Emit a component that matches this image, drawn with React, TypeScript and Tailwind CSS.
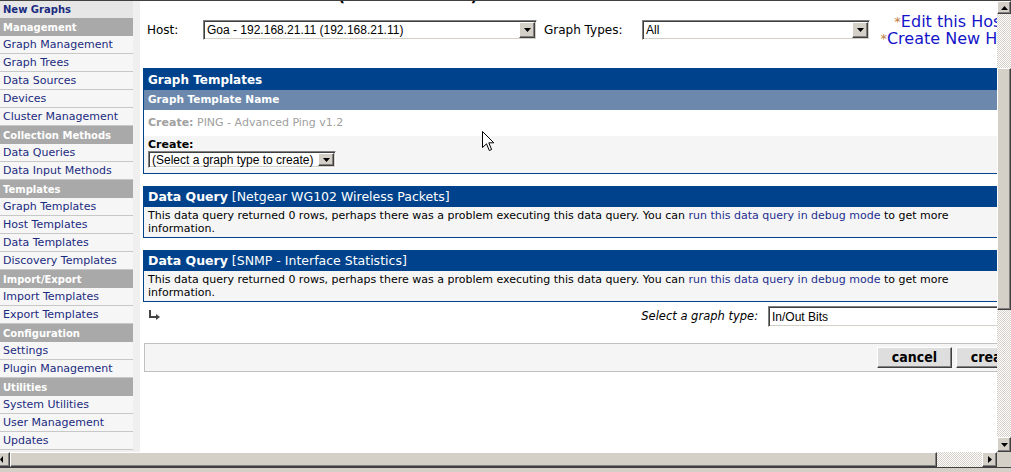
import React from 'react';

const menu: [string, string][] = [
  ['sel', 'New Graphs'],
  ['h', 'Management'],
  ['i', 'Graph Management'],
  ['i', 'Graph Trees'],
  ['i', 'Data Sources'],
  ['i', 'Devices'],
  ['i', 'Cluster Management'],
  ['h', 'Collection Methods'],
  ['i', 'Data Queries'],
  ['i', 'Data Input Methods'],
  ['h', 'Templates'],
  ['i', 'Graph Templates'],
  ['i', 'Host Templates'],
  ['i', 'Data Templates'],
  ['i', 'Discovery Templates'],
  ['h', 'Import/Export'],
  ['i', 'Import Templates'],
  ['i', 'Export Templates'],
  ['h', 'Configuration'],
  ['i', 'Settings'],
  ['i', 'Plugin Management'],
  ['h', 'Utilities'],
  ['i', 'System Utilities'],
  ['i', 'User Management'],
  ['i', 'Updates'],
];

const checker =
  'bg-[image:repeating-conic-gradient(#d4d0c8_0%_25%,#ffffff_0%_50%)] bg-[length:2px_2px]';
const raised =
  'bg-[#d4d0c8] border border-t-white border-l-white border-r-[#404040] border-b-[#404040] shadow-[inset_-1px_-1px_#808080]';

const Sidebar = () => (
  <div className="w-[140px] shrink-0 bg-[#efefef] h-full overflow-hidden">
    {menu.map(([kind, label], i) => {
      if (kind === 'h') {
        return (
          <div key={i} className="w-[133px] h-[18px] bg-[#a9a9a9] text-white font-bold text-[10px] flex items-center pl-[3px] pt-[1px]">
            {label}
          </div>
        );
      }
      if (kind === 'sel') {
        return (
          <div key={i} className="w-[133px] h-[17px] bg-[#e6e6e6] text-[#1b2b80] font-bold text-[10px] flex items-center pl-[3px]">
            {label}
          </div>
        );
      }
      return (
        <div key={i} className="w-[133px] h-[18px] bg-[#f6f6f6] border-b border-[#c8c8c8] text-[#1b2b80] text-[11px] flex items-center pl-[3px] pt-[1px] whitespace-nowrap">
          {label}
        </div>
      );
    })}
  </div>
);

const Select = ({ value, className, arrow = true }: { value: string; className: string; arrow?: boolean }) => (
  <div className={`flex bg-white border border-t-[#808080] border-l-[#808080] border-r-white border-b-white shadow-[inset_1px_1px_#404040,inset_-1px_-1px_#d4d0c8] ${className}`}>
    <span className="flex-1 pl-[3px] flex items-center font-['Liberation_Sans',Arial,sans-serif] text-[12px] text-black whitespace-nowrap overflow-hidden">
      {value}
    </span>
    {arrow && (
      <span className={`w-[16px] my-[1px] mr-[1px] flex items-center justify-center ${raised}`}>
        <svg width="7" height="4" viewBox="0 0 7 4"><path d="M0 0h7L3.5 4z" fill="#000" /></svg>
      </span>
    )}
  </div>
);

const DataQuery = ({ name }: { name: string }) => (
  <div className="mt-[12px] border border-[#00438c]">
    <div className="h-[20px] bg-[#00438c] text-white text-[12.5px] flex items-center px-[4px] whitespace-nowrap">
      <b>Data Query</b>&nbsp;[{name}]
    </div>
    <div className="bg-[#f5f5f5] px-[4px] py-[2px] text-[11px] leading-[13px] text-black whitespace-nowrap">
      This data query returned 0 rows, perhaps there was a problem executing this data query. You can{' '}
      <span className="text-[#1f2f8f]">run this data query in debug mode</span> to get more
      <br />
      information.
    </div>
  </div>
);

const Content = () => (
  <div className="w-[857px] h-full overflow-hidden bg-white">
    <div className="w-[901px] pl-[3px]">
      <div className="h-[5px] overflow-hidden">
        <div className="-mt-[14px] pl-[13px] text-[15.5px] leading-[18px] font-bold whitespace-nowrap text-black">
          Goa - 192.168.21.11 (192.168.21.11)
        </div>
      </div>

      <div className="mt-[6px] h-[36px] flex items-center text-[12px] text-black">
        <span className="w-[60px] pl-[4px]">Host:</span>
        <Select value="Goa - 192.168.21.11 (192.168.21.11)" className="w-[334px] h-[20px]" />
        <span className="w-[105px] pl-[7px]">Graph Types:</span>
        <Select value="All" className="w-[228px] h-[20px]" />
        <div className="w-[162px] text-center text-[16px] leading-[17px] whitespace-nowrap">
          <div>
            <span className="text-[#c0803f] text-[13px] align-top">*</span>
            <span className="text-[#1414c8]">Edit this Host</span>
          </div>
          <div>
            <span className="text-[#c0803f] text-[13px] align-top">*</span>
            <span className="text-[#1414c8]">Create New Host</span>
          </div>
        </div>
      </div>

      <div className="mt-[20px] border border-[#00438c]">
        <div className="h-[21px] bg-[#00438c] text-white font-bold text-[12px] flex items-center px-[4px]">
          Graph Templates
        </div>
        <div className="h-[20px] bg-[#6d88ad] text-white font-bold text-[10.5px] flex items-center px-[4px]">
          Graph Template Name
        </div>
        <div className="h-[26px] bg-white text-[#a0a0a0] text-[11px] flex items-center px-[4px]">
          <b>Create:</b>&nbsp;PING - Advanced Ping v1.2
        </div>
        <div className="h-[37px] bg-[#f5f5f5] px-[4px] pt-[3px]">
          <div className="font-bold text-[11px] leading-[12px] text-black">Create:</div>
          <Select value="(Select a graph type to create)" className="w-[188px] h-[17px]" />
        </div>
      </div>

      <DataQuery name="Netgear WG102 Wireless Packets" />
      <DataQuery name="SNMP - Interface Statistics" />

      <div className="mt-[4px] h-[21px] flex items-center pl-[6px] pr-[3px]">
        <svg width="12" height="10" viewBox="0 0 12 10" className="self-start mt-[4px]">
          <path d="M1 0v7h7" stroke="#444" strokeWidth="2" fill="none" />
          <path d="M7 4l4 3-4 3z" fill="#444" />
        </svg>
        <span className="flex-1" />
        <span className="italic text-[11.5px] text-black mr-[10px]">Select a graph type:</span>
        <Select value="In/Out Bits" className="w-[270px] h-[21px]" arrow={false} />
      </div>

      <div className="mt-[16px] ml-[1px] h-[29px] border border-[#c0c0c0] bg-[#f5f5f5] flex items-center justify-end gap-[4px] pr-[9px]">
        {['cancel', 'create'].map((b) => (
          <span
            key={b}
            className={`w-[75px] h-[21px] flex items-center justify-center font-['DejaVu_Sans_Condensed','DejaVu_Sans',sans-serif] font-bold text-[14px] text-black ${raised} bg-[#dedede]`}
          >
            {b}
          </span>
        ))}
      </div>
    </div>
  </div>
);

const VScroll = () => (
  <div className="w-[14px] h-full flex flex-col bg-[#d4d0c8]">
    <div className={`h-[13px] flex items-center justify-center ${raised}`}>
      <svg width="7" height="4" viewBox="0 0 7 4"><path d="M0 4h7L3.5 0z" fill="#000" /></svg>
    </div>
    <div className={`h-[54px] ${checker}`} />
    <div className={`h-[242px] ${raised}`} />
    <div className={`flex-1 ${checker}`} />
    <div className={`h-[15px] flex items-center justify-center ${raised}`}>
      <svg width="7" height="4" viewBox="0 0 7 4"><path d="M0 0h7L3.5 4z" fill="#000" /></svg>
    </div>
  </div>
);

const HScroll = () => (
  <div className="flex h-[15px]">
    <div className={`w-[10px] flex items-center ${raised} border-l-0`}>
      <svg width="3" height="7" viewBox="0 0 3 7"><path d="M3 0v7L0 3.5z" fill="#000" /></svg>
    </div>
    <div className={`w-[927px] ${raised}`} />
    <div className={`w-[45px] ${checker}`} />
    <div className={`w-[15px] flex items-center justify-center ${raised}`}>
      <svg width="4" height="7" viewBox="0 0 4 7"><path d="M0 0v7l4-3.5z" fill="#000" /></svg>
    </div>
    <div className="w-[14px] bg-[#d4d0c8]" />
  </div>
);

export default function App() {
  return (
    <div className="relative w-[1011px] h-[472px] overflow-hidden bg-[#d4d0c8] flex flex-col font-['DejaVu_Sans',Verdana,sans-serif]">
      <div className="h-px bg-[#404040] shrink-0" />
      <div className="flex h-[451px] shrink-0">
        <div className="w-[997px] flex overflow-hidden">
          <Sidebar />
          <Content />
        </div>
        <VScroll />
      </div>
      <HScroll />
      <div className="h-px bg-[#404040] shrink-0" />
      <div className="flex-1 bg-[#d4d0c8]" />

      {/* mouse pointer */}
      <svg className="absolute left-[482px] top-[131px]" width="13" height="21" viewBox="0 0 13 21">
        <path d="M0.5 0.5V16.5L4.5 12.8L7.3 19.5L9.6 18.5L6.8 11.8H11.8Z" fill="#fff" stroke="#000" strokeWidth="1" />
      </svg>
    </div>
  );
}
